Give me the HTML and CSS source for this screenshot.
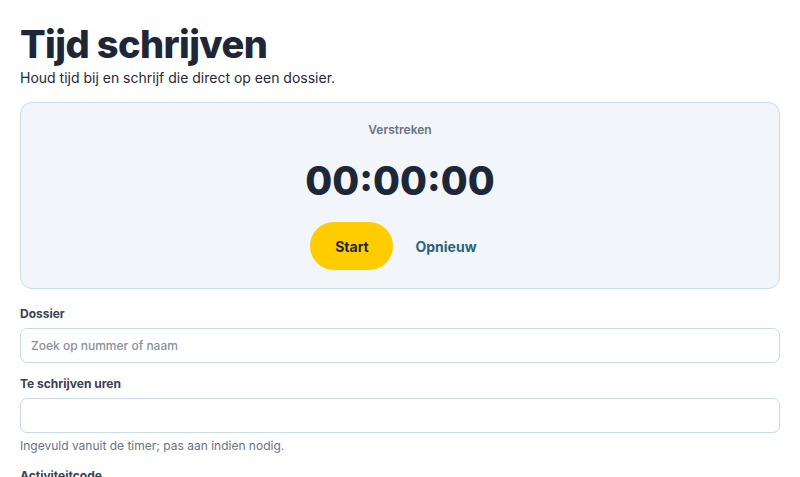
FILE: index.html
```html
<!DOCTYPE html>
<html lang="nl">
<head>
	<meta charset="utf-8">
	<title>Tijd schrijven</title>
	<link rel="stylesheet" href="styles.css">
</head>
<body>

<h1>Tijd schrijven</h1>
<p class="lead">Houd tijd bij en schrijf die direct op een dossier.</p>

<div class="timer">
    <div class="label">Verstreken</div>
    <div class="display">00:00:00</div>
    <div class="actions">
        <button class="start">Start</button>
        <button class="reset">Opnieuw</button>
    </div>
</div>

<form class="entry">
    <label for="dossier">Dossier</label>
    <input id="dossier" type="text" placeholder="Zoek op nummer of naam">

    <label for="uren">Te schrijven uren</label>
    <input id="uren" type="text">
    <div class="hint">Ingevuld vanuit de timer; pas aan indien nodig.</div>

    <label for="activiteit">Activiteitcode</label>
    <input id="activiteit" type="text">
</form>

</body>
</html>
```

FILE: styles.css
```css
body {
    margin: 0;
    padding: 20px;
    font-family: Inter, "Liberation Sans", sans-serif;
    color: #1f2937;
    background: #fff;
}
h1 {
    margin: 0;
    font-size: 38px;
    font-weight: 800;
    line-height: 48px;
    letter-spacing: -0.6px;
    color: #1e2737;
}
.lead {
    margin: 0 0 14px;
    font-size: 14px;
    line-height: 20px;
    color: #1f2937;
}
.timer {
    background: #f2f5f9;
    border: 1px solid #c8dce4;
    border-radius: 12px;
    padding: 19px 20px 18px;
    text-align: center;
}
.timer .label {
    font-size: 12px;
    font-weight: 600;
    color: #6b7280;
    line-height: 16px;
}
.timer .display {
    margin-top: 17px;
    font-size: 39px;
    font-weight: 800;
    line-height: 52px;
    color: #1e2737;
}
.timer .actions {
    margin-top: 15px;
    display: flex;
    justify-content: center;
    align-items: center;
    gap: 9px;
}
.timer button {
    font-family: inherit;
    font-size: 14px;
    font-weight: 700;
    border: none;
    cursor: pointer;
}
.timer .start {
    background: #ffcc00;
    color: #1e2737;
    width: 83px;
    height: 48px;
    border-radius: 24px;
}
.timer .reset {
    background: none;
    color: #2a6478;
    height: 48px;
    padding: 0 13px;
}
.entry {
    margin-top: 17px;
    display: flex;
    flex-direction: column;
}
.entry label {
    font-size: 12px;
    font-weight: 700;
    color: #374151;
    line-height: 16px;
    margin-bottom: 6px;
}
.entry input {
    font-family: inherit;
    font-size: 12px;
    font-weight: 500;
    height: 35px;
    box-sizing: border-box;
    padding: 0 10px;
    border: 1px solid #c8dce4;
    border-radius: 7px;
    margin-bottom: 13px;
    color: #1f2937;
}
.entry input::placeholder { color: #8a9099; }
.entry .hint {
    font-size: 12px;
    color: #6b7280;
    margin: -8px 0 14px;
    line-height: 16px;
}
```
